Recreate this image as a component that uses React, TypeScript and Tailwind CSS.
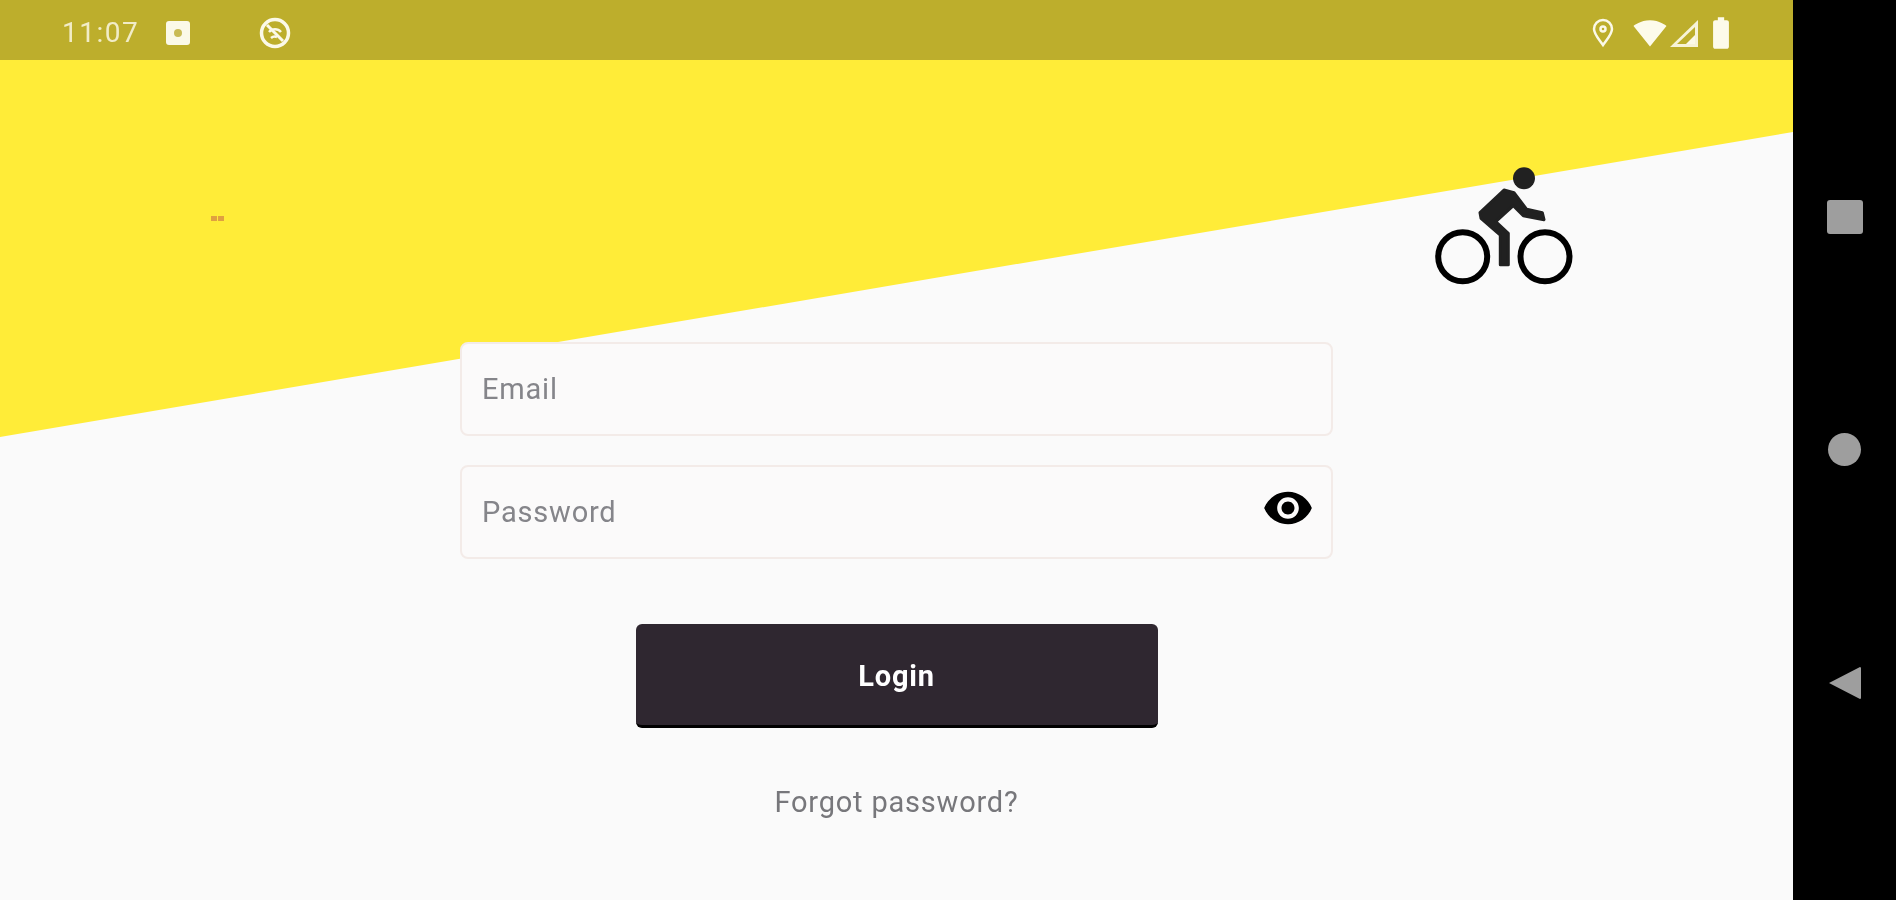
import React from 'react';
import { MdVisibility, MdBatteryFull, MdSignalWifi4Bar } from 'react-icons/md';

const StatusBar: React.FC = () => (
  <div className="relative z-10 flex h-[60px] items-center justify-between bg-[#bdae2c] pl-[62px] pr-[53px] pt-[6px] text-[#f7f3d8] blur-[0.5px]">
    <div className="flex items-center">
      <span className="text-[28px] leading-none tracking-[1.5px] opacity-90">11:07</span>
      <div className="ml-[27px] flex h-[24px] w-[24px] items-center justify-center rounded-[3px] bg-[#fbf9e8]">
        <div className="h-[8px] w-[8px] rounded-full bg-[#c9bb55]" />
      </div>
      <svg className="ml-[68px]" width="34" height="34" viewBox="0 0 34 34" fill="none" stroke="#fbf9e8">
        <circle cx="17" cy="17" r="13.5" strokeWidth="3.5" />
        <path d="M9 9l16 16" strokeWidth="3" />
        <path d="M11 16a8 8 0 0 1 12 0M13 22a6 6 0 0 1 6-1" strokeWidth="2.5" />
      </svg>
    </div>
    <div className="flex items-center">
      <svg width="24" height="30" viewBox="0 0 24 30" fill="none" stroke="#fbf9e8" strokeWidth="2.5">
        <path d="M12 27C7 20 3 16 3 11a9 9 0 0 1 18 0c0 5-4 9-9 16z" />
        <circle cx="12" cy="11" r="2.5" />
      </svg>
      <MdSignalWifi4Bar className="ml-[18px] text-[#fdfbea]" size={34} />
      <svg className="ml-[2px]" width="30" height="30" viewBox="0 0 30 30">
        <path d="M1 29L29 2v27z" fill="#f7f3d8" />
        <path d="M8 26L26 9v17z" fill="#bdae2c" />
        <path d="M17 26l9-9v9z" fill="#fbf9e8" />
      </svg>
      <MdBatteryFull className="ml-[3px] text-[#fdfbea]" size={38} />
    </div>
  </div>
);

const BikeLogo: React.FC = () => (
  <svg className="absolute left-[1430px] top-[164px] blur-[0.5px]" width="146" height="126" viewBox="0 0 146 126" fill="none">
    <circle cx="94" cy="14.3" r="11" fill="#212121" />
    <circle cx="32.7" cy="92.7" r="24.5" stroke="#000" strokeWidth="6" />
    <circle cx="115" cy="92.7" r="24.5" stroke="#000" strokeWidth="6" />
    <path
      d="M74 26l10 2.7 12.7 16.6 15.6 3.4 1.7 7-20.7-4-10-10-17.6 16 12.6 11.6v31.4h-8V71L51 54.3l-1-5.6z"
      fill="#212121"
      stroke="#212121"
      strokeWidth="3"
      strokeLinejoin="round"
    />
  </svg>
);

const Field: React.FC<{ label: string; children?: React.ReactNode }> = ({ label, children }) => (
  <div className="flex h-[94px] items-center justify-between rounded-[8px] border-2 border-[#f3ebe8] bg-[#fbfafa] pl-[20px] pr-[17px]">
    <span className="text-[29px] leading-none tracking-[0.8px] text-[#85858a] blur-[0.5px]">{label}</span>
    {children}
  </div>
);

const App: React.FC = () => {
  return (
    <div className="flex h-[900px] w-[1896px] overflow-hidden bg-black font-['Roboto',sans-serif]">
      <div className="relative flex w-[1793px] flex-col bg-[#fafafa]">
        <svg className="absolute left-0 top-[60px]" width="1793" height="380" viewBox="0 0 1793 380">
          <polygon points="0,0 1793,0 1793,72 0,377" fill="#ffec38" />
        </svg>
        <div className="absolute left-[211px] top-[216px] flex gap-[1px]">
          <div className="h-[5px] w-[6px] bg-[#e0a040]" />
          <div className="h-[5px] w-[6px] bg-[#e0a040]" />
        </div>
        <BikeLogo />
        <StatusBar />

        <div className="relative mx-auto mt-[282px] flex w-[873px] flex-col items-center">
          <div className="flex w-full flex-col gap-[29px]">
            <Field label="Email" />
            <Field label="Password">
              <MdVisibility className="mb-[8px] text-black blur-[0.4px]" size={52} />
            </Field>
          </div>
          <button className="mt-[65px] flex h-[104px] w-[522px] items-center justify-center rounded-[6px] border-b-[3px] border-black bg-[#2f2730] pt-[5px] text-[29px] font-bold tracking-[0.8px] text-white">
            <span className="blur-[0.5px]">Login</span>
          </button>
          <a className="mt-[58px] text-[29px] leading-[32px] tracking-[0.8px] text-[#77777b] blur-[0.5px]">Forgot password?</a>
        </div>
      </div>

      <div className="flex flex-1 flex-col items-center gap-[199px] pt-[200px]">
        <div className="h-[34px] w-[36px] rounded-[3px] bg-[#9e9e9e]" />
        <div className="h-[33px] w-[33px] rounded-full bg-[#9e9e9e]" />
        <svg width="36" height="36" viewBox="0 0 36 36">
          <path d="M2 18L33 2c1 0 1 1 1 2v28c0 1 0 2-1 2z" fill="#9e9e9e" />
        </svg>
      </div>
    </div>
  );
};

export default App;
